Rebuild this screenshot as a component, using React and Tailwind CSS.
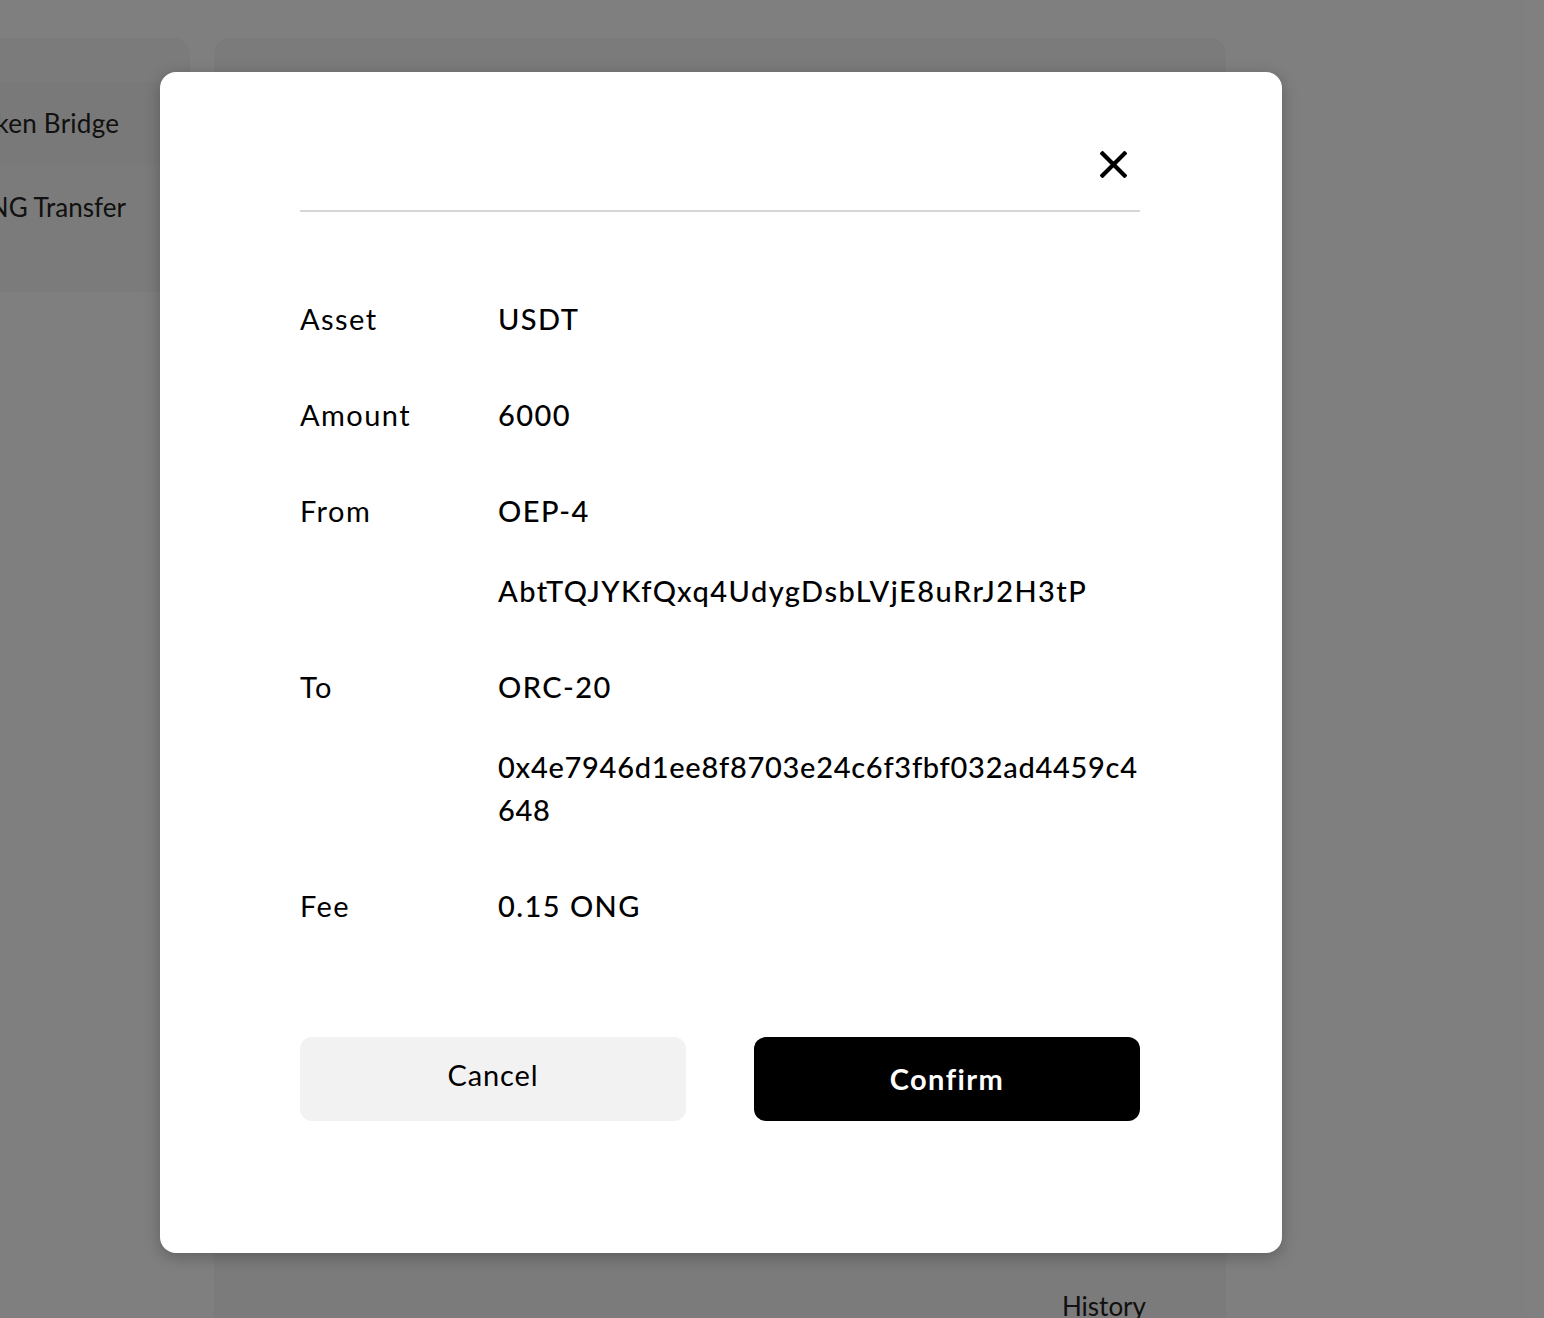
import React from "react";

function Row({ label, children }) {
  return (
    <div className="flex">
      <div className="w-[198px] shrink-0 font-normal">{label}</div>
      <div className="flex-1 min-w-0 flex flex-col gap-[37px] font-medium">{children}</div>
    </div>
  );
}

export default function App() {
  return (
    <div
      className="relative w-[1544px] h-[1318px] overflow-hidden bg-white"
      style={{ fontFamily: "Lato, 'Noto Sans', sans-serif" }}
    >
      {/* background page */}
      <div className="flex items-start gap-[24px] pt-[38px] ml-[-56px] text-[26px] text-[#222]">
        <div className="w-[246px] shrink-0 rounded-2xl bg-[#f7f7f7] flex flex-col pt-[44px] pb-[42px]">
          <div className="h-[83px] flex items-center pl-[24px] bg-[#f3f3f3] whitespace-nowrap tracking-[0.01em]">Token Bridge</div>
          <div className="h-[85px] flex items-center pl-[24px] whitespace-nowrap">ONG Transfer</div>
        </div>
        <div className="w-[1012px] shrink-0 h-[1400px] rounded-2xl bg-[#f6f6f6] flex flex-col pt-[1253px] items-end pr-[80px]">
          <div className="leading-[30px]">History</div>
        </div>
      </div>

      {/* overlay */}
      <div className="absolute inset-0 bg-black/50 flex items-start">
        <div className="ml-[160px] mt-[72px] w-[1122px] h-[1181px] bg-white rounded-2xl shadow-[0_4px_16px_rgba(0,0,0,0.25)] pl-[140px] pr-[142px] pt-[79px] text-black">
          <div className="flex justify-end pr-[13px]">
            <svg width="27" height="27" viewBox="0 0 27 27" className="block">
              <path d="M2.5 2.5 L24.5 24.5 M24.5 2.5 L2.5 24.5" stroke="#000" strokeWidth="4.2" strokeLinecap="square" />
            </svg>
          </div>
          <div className="mt-[32px] h-[2px] bg-[#d6d6d6]" />

          <div className="mt-[85px] flex flex-col gap-[53px] text-[29px] leading-[43px] tracking-[0.05em]">
            <Row label="Asset">
              <div>USDT</div>
            </Row>
            <Row label="Amount">
              <div>6000</div>
            </Row>
            <Row label="From">
              <div>OEP-4</div>
              <div className="break-all">AbtTQJYKfQxq4UdygDsbLVjE8uRrJ2H3tP</div>
            </Row>
            <Row label="To">
              <div>ORC-20</div>
              <div className="break-all tracking-[0.025em]">0x4e7946d1ee8f8703e24c6f3fbf032ad4459c4648</div>
            </Row>
            <Row label="Fee">
              <div>0.15 ONG</div>
            </Row>
          </div>

          <div className="mt-[110px] flex justify-between">
            <button className="w-[386px] h-[84px] rounded-xl bg-[#f2f2f2] text-[29px] tracking-[0.03em] text-black flex items-center justify-center pb-[8px]">
              Cancel
            </button>
            <button className="w-[386px] h-[84px] rounded-xl bg-black text-[29px] font-bold tracking-[0.05em] text-white flex items-center justify-center">
              Confirm
            </button>
          </div>
        </div>
      </div>
    </div>
  );
}
